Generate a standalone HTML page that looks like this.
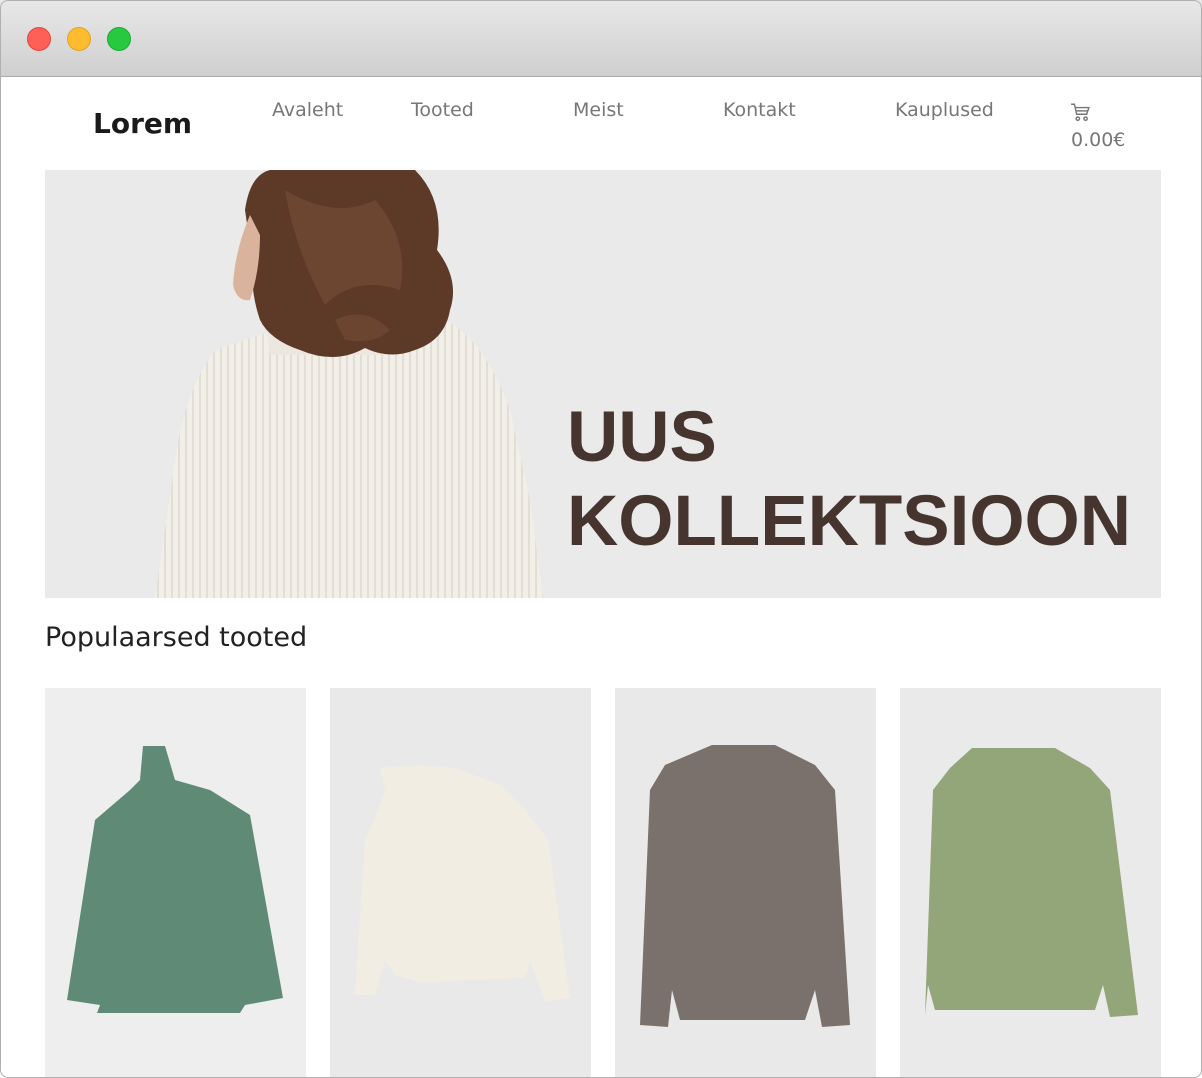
<!DOCTYPE html>
<html><head><meta charset="utf-8"><style>
*{margin:0;padding:0;box-sizing:border-box}
body{width:1202px;height:1078px;background:#fff;overflow:hidden;position:relative;font-family:"DejaVu Sans","Liberation Sans",sans-serif}
.win{position:absolute;left:0;top:0;width:1202px;height:1078px;overflow:hidden;background:#fff}
.frame{position:absolute;left:0;top:0;width:1202px;height:1078px;border:1px solid #b0b0b0;border-radius:8px;pointer-events:none}
.bar{position:absolute;left:0;top:0;width:1202px;height:77px;background:linear-gradient(#e8e8e8,#cfcfcf);border-bottom:1px solid #aaa}
.dot{position:absolute;top:27px;width:24px;height:24px;border-radius:50%}
.nav{position:absolute;color:#777;font-size:19px;top:99px}
.hero{position:absolute;left:45px;top:170px;width:1116px;height:428px;background:#e9eae9;overflow:hidden}
.t{position:absolute;left:522px;font-family:"Liberation Sans",sans-serif;font-weight:bold;color:#46352f;font-size:71px;letter-spacing:0}
.card{position:absolute;top:688px;width:261px;height:400px;background:#ebebeb}
</style></head><body>
<div class="win">
<div class="bar">
<div class="dot" style="left:27px;background:#fe5f57;border:1px solid #e2463f"></div>
<div class="dot" style="left:67px;background:#febc2e;border:1px solid #e0a123"></div>
<div class="dot" style="left:107px;background:#28c840;border:1px solid #1eaa32"></div>
</div>
<div style="position:absolute;left:93px;top:107px;font-size:28px;font-weight:bold;color:#1a1a1a">Lorem</div>
<div class="nav" style="left:272px">Avaleht</div>
<div class="nav" style="left:411px">Tooted</div>
<div class="nav" style="left:573px">Meist</div>
<div class="nav" style="left:723px">Kontakt</div>
<div class="nav" style="left:895px">Kauplused</div>
<svg style="position:absolute;left:1070px;top:102px" width="20" height="20" viewBox="0 0 18 18" fill="none" stroke="#777" stroke-width="1.3"><path d="M1 2h3l2 9h9l2-6H5"/><path d="M6 8h10"/><circle cx="7" cy="15" r="1.5"/><circle cx="14" cy="15" r="1.5"/></svg>
<div class="nav" style="left:1071px;top:129px">0.00€</div>

<div class="hero">
<svg width="1116" height="428" style="position:absolute;left:0;top:0">
<defs><pattern id="rib" width="7" height="10" patternUnits="userSpaceOnUse"><rect width="7" height="10" fill="#f2efe8"/><rect width="2" height="10" fill="#e2ded5"/></pattern></defs>
<path d="M110 428 L130 290 Q140 220 170 180 L230 160 L330 150 L400 150 Q440 170 465 240 L485 330 L498 428 Z" fill="url(#rib)"/>
<path d="M220 150 L330 140 L340 185 L225 185 Z" fill="#ece8df"/>
<path d="M200 40 Q205 5 225 0 L370 0 Q400 30 392 80 Q415 110 405 140 Q400 170 370 180 Q345 190 320 178 Q290 195 255 180 Q225 170 215 150 Q205 120 208 95 Z" fill="#5c3a27"/>
<path d="M205 45 Q190 80 188 115 Q192 132 205 130 Q215 100 215 65 Z" fill="#d9b39c"/>
<path d="M240 20 Q290 50 330 30 Q365 70 355 120 Q310 105 280 135 Q250 80 240 20Z" fill="#7a5038" opacity=".55"/>
<path d="M290 150 Q320 135 345 160 Q330 175 300 170Z" fill="#7a5038" opacity=".5"/>
</svg>
<div class="t" style="top:227px">UUS</div>
<div class="t" style="top:311px">KOLLEKTSIOON</div>
</div>

<div style="position:absolute;left:45px;top:622px;font-size:27px;color:#222">Populaarsed tooted</div>

<div class="card" style="left:45px;background:#eeeeee"></div>
<div class="card" style="left:330px;background:#e9e9e9"></div>
<div class="card" style="left:615px;background:#e9e9e9"></div>
<div class="card" style="left:900px;background:#eaeaea"></div>
<svg width="1202" height="1078" style="position:absolute;left:0;top:0">
<polygon points="143,746 165,746 175,780 210,790 250,815 283,998 245,1005 240,1013 97,1013 100,1005 67,1000 95,820 130,790 140,780" fill="#5f8a76"/>
<polygon points="380,768 418,765 455,768 500,785 525,810 548,840 570,998 545,1002 530,960 525,978 420,982 395,975 385,960 375,995 355,995 365,840 378,810 385,790" fill="#f1ede3"/>
<polygon points="712,745 775,745 815,765 835,790 850,1025 822,1027 815,990 805,1020 680,1020 672,990 668,1027 640,1025 650,790 665,765" fill="#7a716c"/>
<polygon points="972,748 1055,748 1090,768 1110,790 1138,1015 1110,1017 1103,985 1095,1010 935,1010 928,985 925,1015 933,790 950,768" fill="#93a67a"/>
</svg>
</div>
<div class="frame"></div>
</body></html>
